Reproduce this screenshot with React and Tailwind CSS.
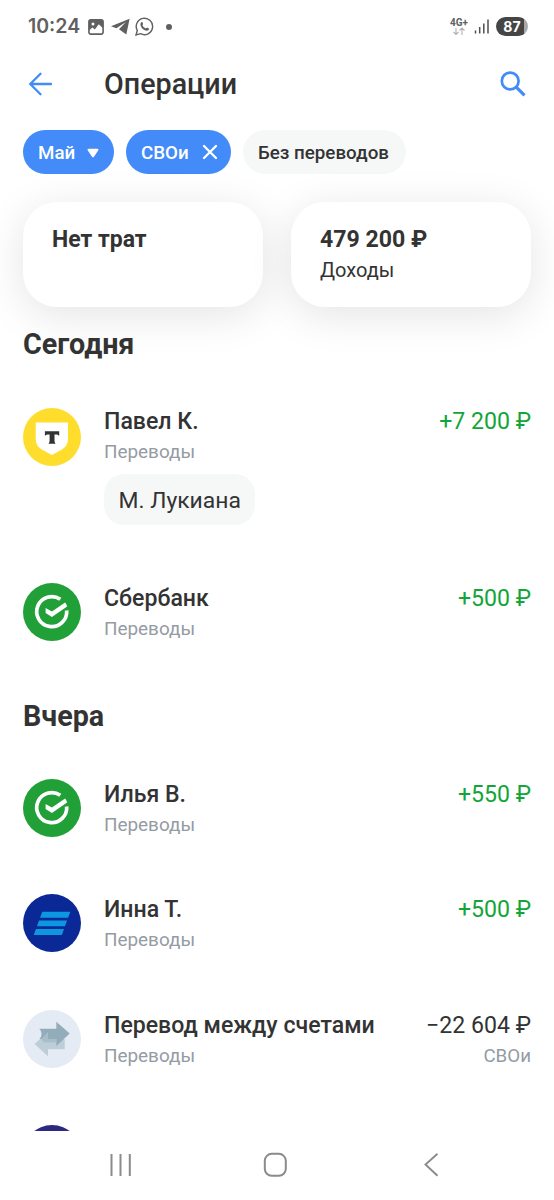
const TINKOFF = 'tbank';
const SBER = 'sber';
const VTB = 'vtb';
const SWAP = 'swap';

const today = [
  { id: 1, logo: TINKOFF, title: 'Павел К.', category: 'Переводы', amount: '+7 200 ₽', income: true, message: 'М. Лукиана' },
  { id: 2, logo: SBER, title: 'Сбербанк', category: 'Переводы', amount: '+500 ₽', income: true },
];

const yesterday = [
  { id: 3, logo: SBER, title: 'Илья В.', category: 'Переводы', amount: '+550 ₽', income: true },
  { id: 4, logo: VTB, title: 'Инна Т.', category: 'Переводы', amount: '+500 ₽', income: true },
  { id: 5, logo: SWAP, title: 'Перевод между счетами', category: 'Переводы', amount: '−22 604 ₽', account: 'СВОи' },
  { id: 6, logo: 'next' },
];

function Logo({ name }) {
  return (
    <svg viewBox="0 0 58 58" className="size-[58px] shrink-0">
      {name === TINKOFF && (
        <>
          <circle cx="29" cy="29" r="29" fill="#ffdd2d" />
          <path d="M12.700 14.600H45v16.200c0 5-2.400 8.500-6 10.600L28.900 47 18.700 41.400c-3.600-2.100-6-5.600-6-10.600Z" fill="#fff" />
          <path d="M21.900 23.200h14.300v4.700c-.8-.9-2.200-1.300-3.700-1.300h-1v5.800c0 1.600.6 2.700 1.200 3.400h-7.300c.6-.7 1.200-1.800 1.200-3.400v-5.800h-1c-1.500 0-2.900.4-3.700 1.300Z" fill="#333" />
        </>
      )}
      {name === SBER && (
        <>
          <circle cx="29" cy="29" r="29" fill="#21a038" />
          <path d="M37.300 16.300A15 15 0 1 0 43.700 27.500" fill="none" stroke="#fff" strokeWidth="3.700" />
          <path d="M22.600 25v5l6.300 3.900 15.200-10.500c-.4-1.400-1.100-2.700-2-3.900L28.900 28.600Z" fill="#fff" />
        </>
      )}
      {name === VTB && (
        <>
          <circle cx="29" cy="29" r="29" fill="#0a2896" />
          <g fill="#0d97e2">
            <path d="M19.200 17.700h28.100l-2.200 6.100h-28Z" />
            <path d="M16 26.500h28.100l-2.200 5.800h-28Z" />
            <path d="M12.900 35.100H41l-2.200 5.900H10.700Z" />
          </g>
        </>
      )}
      {name === SWAP && (
        <>
          <circle cx="29" cy="29" r="29" fill="#e4ebf4" />
          <path d="M41.700 29v10.200H25v7L11.500 34 25 22v7Z" fill="#bdced8" />
          <path d="M16.300 18.700h17v-7L46.700 23.500 33.300 36v-7h-17c1.500-1.700 2.200-3 2.200-5.100s-.7-3.500-2.200-5.200Z" fill="#92acba" />
          <path d="M18.300 29 25 22v7h8.300v3.500H21Z" fill="#a8bfca" />
        </>
      )}
      {name === 'next' && <circle cx="29" cy="29" r="29" fill="#2b2a80" />}
    </svg>
  );
}

function StatusBar() {
  return (
    <div className="flex h-[53px] items-center pl-7 pr-[26px] text-[#606060]">
      <span className="font-['Inter',sans-serif] text-[19.500px] font-semibold leading-none">10:24</span>
      <svg viewBox="0 0 16 16" className="ml-[8px] size-4" fill="none">
        <rect x=".9" y=".9" width="14.200" height="14.200" rx="2" stroke="currentColor" strokeWidth="1.600" />
        <path d="M1 1h14v8.300l-4.200-4.100-4 5.200-2.400-2L1 11.500Z" fill="currentColor" />
        <circle cx="5" cy="5" r="1.500" fill="#fff" />
      </svg>
      <svg viewBox="0 0 19 17" className="ml-[7px] h-[17px] w-[19px]" fill="currentColor">
        <path d="M18.600.7 0 8.200l5.400 2L14.900 4 8 11.300l7.300 5.200Z" />
      </svg>
      <svg viewBox="0 0 19 19" className="ml-[5px] size-[19px]" fill="none">
        <path d="M1 18l1.300-4.500A8.200 8.200 0 1 1 5.600 16.700Z" stroke="currentColor" strokeWidth="1.400" />
        <path d="M6.300 5.300c.5-.4 1-.3 1.200.2l.6 1.500c.1.400-.7 1-.7 1.300.7 1.500 1.900 2.500 3.400 3.100.4 0 .9-1 1.300-.9l1.700.9c.4.300.2 1.100-.2 1.600-2.700 2.500-9.400-2.700-8-6.700Z" fill="currentColor" />
      </svg>
      <span className="ml-[12px] size-[6px] rounded-full bg-[#606060]" />

      <div className="ml-auto flex items-center">
        <div className="flex flex-col items-center">
          <span className="font-['Roboto',sans-serif] text-[10px] font-bold leading-[9px]">4G+</span>
          <svg viewBox="0 0 12 9" className="h-[9px] w-3" fill="none" stroke="#b2b2b2" strokeWidth="1.100">
            <path d="M3 1v6.500M.5 5 3 7.500 5.500 5M9 8V1M6.500 3.500 9 1l2.500 2.500" />
          </svg>
        </div>
        <svg viewBox="0 0 15 15" className="ml-[6px] size-[15px]" stroke="#505050" strokeWidth="1.500">
          <path d="M1.500 14.500v-3M5.700 14.500V8M9.800 14.500V4.500M14 14.500V.5" />
        </svg>
        <div className="ml-[7px] flex h-[19px] w-8 items-center justify-center rounded-full bg-linear-to-r from-[#454545] from-88% to-[#a9a9a9] to-88%">
          <span className="font-['Inter',sans-serif] text-[14px] font-bold leading-none text-white">87</span>
        </div>
      </div>
    </div>
  );
}

function Header() {
  return (
    <header className="flex h-[61px] items-center pl-7 pr-7">
      <svg viewBox="0 0 24 24" className="h-6 w-6" fill="none" stroke="#428bf9" strokeWidth="2.300" strokeLinecap="round">
        <path d="M12.500 1.800 2.300 12l10.200 10.200M2.300 12H23" />
      </svg>
      <h1 className="ml-[52px] pt-0.5 text-[28.700px] font-medium leading-none">Операции</h1>
      <svg viewBox="0 0 26 26" className="ml-auto size-[26px]" fill="none" stroke="#428bf9">
        <circle cx="10.200" cy="10" r="8.400" strokeWidth="2.700" />
        <path d="m16.500 16.300 8 8" strokeWidth="3.100" />
      </svg>
    </header>
  );
}

function Filters() {
  return (
    <div className="mt-4 flex gap-3 px-[23px] text-[18.750px] font-medium">
      <button className="flex h-[43.500px] w-[91px] items-center rounded-full bg-[#428bf9] pl-[15px] pt-0.5 text-white">
        Май
        <svg viewBox="0 0 12 10" className="ml-[12px] h-[10px] w-3" fill="#fff">
          <path d="M1.500.8h9c.8 0 1.200.8.800 1.400L7 8.700c-.5.700-1.500.7-2 0L.7 2.200C.3 1.600.7.800 1.500.800Z" />
        </svg>
      </button>
      <button className="flex h-[43.500px] w-[105px] items-center rounded-full bg-[#428bf9] pl-[15px] pt-0.5 text-white">
        СВОи
        <svg viewBox="0 0 16 16" className="mb-0.5 ml-[13px] size-4" fill="none" stroke="#fff" strokeWidth="2.300" strokeLinecap="round">
          <path d="m2 2 12 12M14 2 2 14" />
        </svg>
      </button>
      <button className="flex h-[43.500px] w-[163px] items-center whitespace-nowrap rounded-full bg-[#f6f8f8] pl-[15px] pt-0.5">Без переводов</button>
    </div>
  );
}

function Summary() {
  return (
    <div className="mt-[28.500px] grid grid-cols-2 gap-7 px-[23px]">
      <div className="h-[105px] rounded-[34px] bg-white px-[29px] pt-6 shadow-[0_8px_44px_rgba(0,0,0,0.11)]">
        <div className="text-[23px] font-bold leading-[27px]">Нет трат</div>
      </div>
      <div className="h-[105px] rounded-[34px] bg-white px-[29px] pt-6 shadow-[0_8px_44px_rgba(0,0,0,0.11)]">
        <div className="text-[23.100px] font-bold leading-[27px]">479 200 ₽</div>
        <div className="mt-[5px] text-[20px] leading-6">Доходы</div>
      </div>
    </div>
  );
}

function Operation({ op }) {
  return (
    <li className="flex">
      <Logo name={op.logo} />
      <div className={op.message ? 'ml-[23px] flex-1' : 'ml-[23px] flex-1 pt-0.5'}>
        <div className="text-[23.100px] font-medium leading-[27px]">{op.title}</div>
        <div className="mt-[6px] text-[18.900px] leading-[22px] text-[#959ba4]">{op.category}</div>
        {op.message && (
          <div className="mt-[11px] flex h-[51px] w-fit items-center rounded-[20px] bg-[#f6f8f8] px-[14.500px] pt-[3px] text-[22.900px]">
            {op.message}
          </div>
        )}
      </div>
      <div className={op.message ? 'text-right' : 'pt-0.5 text-right'}>
        <div className={op.income ? 'text-[23.100px] leading-[27px] text-[#12a537]' : 'text-[23.100px] leading-[27px]'}>
          {op.amount}
        </div>
        {op.account && <div className="mt-[6px] text-[18.750px] leading-[22px] text-[#959ba4]">{op.account}</div>}
      </div>
    </li>
  );
}

function NavBar() {
  return (
    <nav className="h-[69px] bg-white">
      <svg viewBox="0 0 554 69" className="h-[69px] w-full" fill="none" stroke="#8b8b8b" strokeWidth="2">
        <path d="M111.500 23v22M120.500 23v22M129.800 23v22" />
        <rect x="264.800" y="22.800" width="21" height="22" rx="7" />
        <path d="M437.500 22.700 425.500 33.500l12 11.300" strokeWidth="1.900" />
      </svg>
    </nav>
  );
}

export default function App() {
  return (
    <div className="flex h-[1200px] w-[554px] flex-col overflow-hidden bg-white font-['Roboto',sans-serif] text-[#333]">
      <div className="min-h-0 flex-1 overflow-hidden">
        <StatusBar />
        <Header />
        <Filters />
        <Summary />

        <h2 className="mt-[20px] px-[23px] text-[28.700px] font-bold leading-[34px]">Сегодня</h2>
        <ul className="mt-[47px] space-y-[57.500px] px-[23px]">
          {today.map(op => <Operation key={op.id} op={op} />)}
        </ul>

        <h2 className="mt-[58px] px-[23px] text-[28.700px] font-bold leading-[34px]">Вчера</h2>
        <ul className="mt-[46px] space-y-[57.500px] px-[23px]">
          {yesterday.map(op => <Operation key={op.id} op={op} />)}
        </ul>
      </div>
      <NavBar />
    </div>
  );
}
